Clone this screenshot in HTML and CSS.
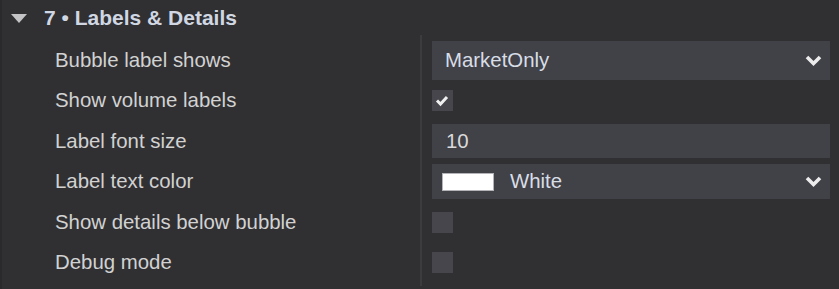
FILE: index.html
```html
<!DOCTYPE html>
<html>
<head>
	<title>Labels &amp; Details</title>
	<link rel="stylesheet" href="styles.css">
</head>
<body>
	<div class="panel">
		<div class="section-head">
			<span class="caret"></span>
			<span class="section-title">7 &bull; Labels &amp; Details</span>
		</div>

		<div class="section-body">
			<div class="divider"></div>

			<div class="label">Bubble label shows</div>
			<div class="control">
				<div class="select">
					<span class="select-text">MarketOnly</span>
					<svg class="chev" width="17" height="13" viewBox="0 0 17 13"><polyline points="2,3 8.5,9.5 15,3" fill="none" stroke="#ececec" stroke-width="3.6"/></svg>
				</div>
			</div>

			<div class="label">Show volume labels</div>
			<div class="control">
				<span class="check">
					<svg width="21" height="21" viewBox="0 0 21 21"><polyline points="5,10.5 8.5,14 15,7" fill="none" stroke="#f0f0f0" stroke-width="3"/></svg>
				</span>
			</div>

			<div class="label">Label font size</div>
			<div class="control">
				<div class="input">10</div>
			</div>

			<div class="label">Label text color</div>
			<div class="control">
				<div class="select color-select">
					<span class="swatch"></span>
					<span class="select-text">White</span>
					<svg class="chev" width="17" height="13" viewBox="0 0 17 13"><polyline points="2,3 8.5,9.5 15,3" fill="none" stroke="#ececec" stroke-width="3.6"/></svg>
				</div>
			</div>

			<div class="label">Show details below bubble</div>
			<div class="control">
				<span class="check"></span>
			</div>

			<div class="label">Debug mode</div>
			<div class="control">
				<span class="check"></span>
			</div>
		</div>
	</div>
</body>
</html>
```

FILE: styles.css
```css
html, body {margin:0; padding:0; background:#303032;}
body {font-family:"Liberation Sans", Arial, sans-serif; color:#d2d2d2;}
.panel {width:839px; height:289px; box-sizing:border-box; border-left:2px solid #2a2a2c;}

.section-head {display:flex; align-items:center; height:35px; padding-left:9px;}
.caret {flex:none; width:0; height:0; border-left:8px solid transparent; border-right:8px solid transparent;
	border-top:9px solid #c4c4c6; margin-right:17px; margin-top:2px;}
.section-title {font-size:21px; font-weight:bold; color:#d0d7e2;}

.section-body {display:grid; grid-template-columns:418px 2px 1fr; grid-auto-rows:40.5px;
	padding-top:5px;}
.divider {grid-column:2; grid-row:1 / span 6; background:#3c3c3f; margin:-5px 0 -3px;}
.label {grid-column:1; display:flex; align-items:center; padding-left:53px; font-size:20.4px;}
.control {grid-column:3; display:flex; align-items:center; padding:0 9px 0 10px;}

.select {flex:1; display:flex; align-items:center; height:39px; background:#414148;
	padding:0 8px 0 13px;}
.select-text {flex:1; font-size:20.4px; color:#d8dde6;}
.chev {display:block; flex:none;}
.color-select {height:35px; padding-left:10px;}
.swatch {flex:none; width:50px; height:16px; background:#ffffff; border:1px solid #b4b4b8; margin-right:16px;}

.input {flex:1; height:34px; background:#414148; display:flex; align-items:center;
	padding-left:14px; font-size:20.4px; color:#dadada;}

.check {display:block; flex:none; width:21px; height:21px; background:#46464c;}
.check svg {display:block;}
```
